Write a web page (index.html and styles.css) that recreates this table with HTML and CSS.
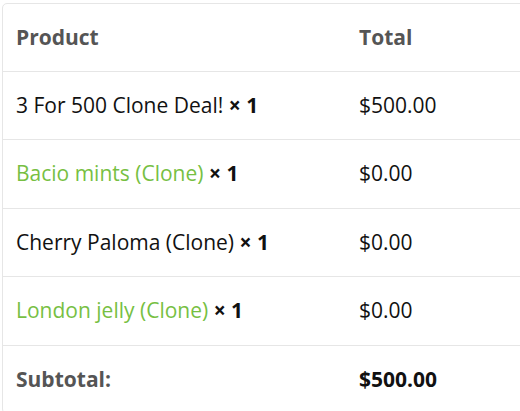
FILE: index.html
```html
<!DOCTYPE html>
<html>
<head>
<meta charset="utf-8">
<link rel="stylesheet" href="styles.css">
</head>
<body>
<table class="order-table">
  <thead>
    <tr>
      <th class="col-product">Product</th>
      <th class="col-total">Total</th>
    </tr>
  </thead>
  <tbody>
    <tr>
      <td class="col-product">3 For 500 Clone Deal! <strong class="qty">× 1</strong></td>
      <td class="col-total">$500.00</td>
    </tr>
    <tr>
      <td class="col-product"><a class="prod-link" href="#">Bacio mints (Clone)</a> <strong class="qty">× 1</strong></td>
      <td class="col-total">$0.00</td>
    </tr>
    <tr>
      <td class="col-product">Cherry Paloma (Clone) <strong class="qty">× 1</strong></td>
      <td class="col-total">$0.00</td>
    </tr>
    <tr>
      <td class="col-product"><a class="prod-link" href="#">London jelly (Clone)</a> <strong class="qty">× 1</strong></td>
      <td class="col-total">$0.00</td>
    </tr>
  </tbody>
  <tfoot>
    <tr>
      <th class="col-product">Subtotal:</th>
      <td class="col-total subtotal">$500.00</td>
    </tr>
  </tfoot>
</table>
</body>
</html>
```

FILE: styles.css
```css
html, body {
  margin: 0;
  padding: 0;
  background: #ffffff;
}
body {
  padding: 3px 0 0 2px;
  font-family: "Open Sans", "Noto Sans", sans-serif;
  font-size: 21px;
  color: #111111;
  overflow: hidden;
}
.order-table {
  width: 560px;
  border: 1px solid #e6e6e6;
  border-radius: 5px;
  border-collapse: separate;
  border-spacing: 0;
  text-align: left;
}
.order-table th,
.order-table td {
  padding: 18px 13px;
  line-height: 31.5px;
  vertical-align: middle;
  border-top: 1px solid #e6e6e6;
}
.order-table thead th {
  border-top: none;
  padding-top: 17.5px;
  padding-bottom: 17.5px;
}
.order-table th {
  font-weight: 700;
  color: #555555;
}
.col-product {
  width: 317px;
}
.qty {
  font-weight: 700;
  color: #111111;
}
.prod-link {
  color: #77bf43;
  text-decoration: none;
}
.subtotal {
  font-weight: 700;
}
```
